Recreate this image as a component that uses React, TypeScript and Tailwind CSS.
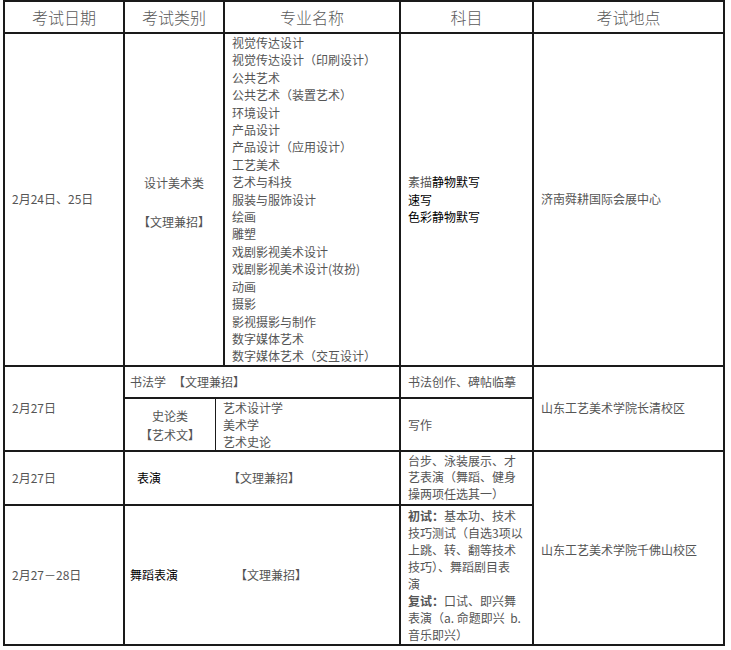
export default function App() {
  return (
    <div className="bg-white w-[731px] h-[650px] pt-0 pl-[3px] font-['Noto_Sans_CJK_SC','Liberation_Sans',sans-serif] text-[12px] text-[#555555]">
      <table className="table-fixed border-separate border-spacing-0 border border-[#1a1a1a] w-[722px]">
        <thead>
          <tr>
            <th className="w-[120px] h-[32px] border border-[#1a1a1a] font-light text-[16px] text-[#5a5a5a] text-center p-0">考试日期</th>
            <th className="w-[100px] h-[32px] border border-[#1a1a1a] font-light text-[16px] text-[#5a5a5a] text-center p-0">考试类别</th>
            <th className="w-[176px] h-[32px] border border-[#1a1a1a] font-light text-[16px] text-[#5a5a5a] text-center p-0">专业名称</th>
            <th className="w-[133px] h-[32px] border border-[#1a1a1a] font-light text-[16px] text-[#5a5a5a] text-center p-0">科目</th>
            <th className="w-[191px] h-[32px] border border-[#1a1a1a] font-light text-[16px] text-[#5a5a5a] text-center p-0">考试地点</th>
          </tr>
        </thead>
        <tbody>
          <tr>
            <td className="h-[332px] border border-[#1a1a1a] px-[7px] align-middle whitespace-nowrap">2月24日、25日</td>
            <td className="border border-[#1a1a1a] p-0 align-middle text-center leading-[19.5px]">
              <div className="pt-[6px]">
                设计美术类
                <br />
                <br />
                【文理兼招】
              </div>
            </td>
            <td className="border border-[#1a1a1a] px-[7px] align-middle leading-[17.4px] whitespace-nowrap">
              视觉传达设计<br />
              视觉传达设计（印刷设计）<br />
              公共艺术<br />
              公共艺术（装置艺术）<br />
              环境设计<br />
              产品设计<br />
              产品设计（应用设计）<br />
              工艺美术<br />
              艺术与科技<br />
              服装与服饰设计<br />
              绘画<br />
              雕塑<br />
              戏剧影视美术设计<br />
              戏剧影视美术设计(妆扮)<br />
              动画<br />
              摄影<br />
              影视摄影与制作<br />
              数字媒体艺术<br />
              数字媒体艺术（交互设计）
            </td>
            <td className="border border-[#1a1a1a] px-[7px] align-middle leading-[17.5px] whitespace-nowrap">
              素描<span className="text-black">静物默写</span>
              <br />
              <span className="text-black">速写</span>
              <br />
              <span className="text-black">色彩静物默写</span>
            </td>
            <td className="border border-[#1a1a1a] px-[7px] align-middle whitespace-nowrap">济南舜耕国际会展中心</td>
          </tr>

          <tr>
            <td rowSpan={2} className="border border-[#1a1a1a] px-[7px] align-middle whitespace-nowrap">2月27日</td>
            <td colSpan={2} className="h-[32px] border border-[#1a1a1a] pl-[5px] align-middle whitespace-nowrap">
              书法学<span className="ml-[7px]">【文理兼招】</span>
            </td>
            <td className="h-[32px] border border-[#1a1a1a] px-[7px] align-middle whitespace-nowrap">书法创作、碑帖临摹</td>
            <td rowSpan={2} className="border border-[#1a1a1a] px-[7px] align-middle whitespace-nowrap">山东工艺美术学院长清校区</td>
          </tr>
          <tr>
            <td colSpan={2} className="h-[53px] border border-[#1a1a1a] p-0 align-middle">
              <div className="flex h-[51px]">
                <div className="w-[91px] border-r border-[#1a1a1a] flex items-center justify-center text-center leading-[19px] pt-[2px]">
                  史论类
                  <br />
                  【艺术文】
                </div>
                <div className="flex-1 flex items-center pl-[7px] leading-[17px] whitespace-nowrap">
                  <div>
                    艺术设计学
                    <br />
                    美术学
                    <br />
                    艺术史论
                  </div>
                </div>
              </div>
            </td>
            <td className="h-[53px] border border-[#1a1a1a] px-[7px] align-middle whitespace-nowrap">
              <div className="pt-[2px]">写作</div>
            </td>
          </tr>

          <tr>
            <td className="h-[54px] border border-[#1a1a1a] px-[7px] align-middle whitespace-nowrap">2月27日</td>
            <td colSpan={2} className="border border-[#1a1a1a] pl-[12px] align-middle whitespace-nowrap">
              <span className="text-black">表演</span>
              <span className="ml-[67px]">【文理兼招】</span>
            </td>
            <td className="border border-[#1a1a1a] px-[7px] align-middle leading-[16.7px] whitespace-nowrap">
              台步、泳装展示、才
              <br />
              艺表演（舞蹈、健身
              <br />
              操两项任选其一）
            </td>
            <td rowSpan={2} className="border border-[#1a1a1a] px-[7px] align-middle whitespace-nowrap">
              <div className="pt-[4px]">山东工艺美术学院千佛山校区</div>
            </td>
          </tr>
          <tr>
            <td className="h-[140px] border border-[#1a1a1a] px-[7px] align-middle whitespace-nowrap">2月27－28日</td>
            <td colSpan={2} className="border border-[#1a1a1a] pl-[5px] align-middle whitespace-nowrap">
              <span className="text-black">舞蹈表演</span>
              <span className="ml-[57px]">【文理兼招】</span>
            </td>
            <td className="border border-[#1a1a1a] px-[7px] align-middle leading-[17px] whitespace-nowrap">
              <span className="font-bold">初试：</span>基本功、技术
              <br />
              技巧测试（自选3项以
              <br />
              上跳、转、翻等技术
              <br />
              技巧）、舞蹈剧目表
              <br />
              演
              <br />
              <span className="font-bold">复试：</span>口试、即兴舞
              <br />
              表演（a. 命题即兴&nbsp; b.
              <br />
              音乐即兴）
            </td>
          </tr>
        </tbody>
      </table>
    </div>
  );
}
